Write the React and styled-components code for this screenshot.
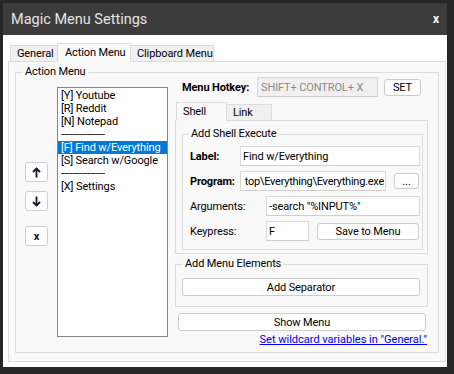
import React, { useState } from 'react';
import styled, { createGlobalStyle } from 'styled-components';

const GlobalStyle = createGlobalStyle`
  body {
    margin: 0;
    background: #262626;
    font-family: Roboto, "Open Sans", sans-serif;
    font-size: 11px;
    letter-spacing: -0.12px;
    color: #000;
  }
`;

const Window = styled.div`
  margin: 3px 0 0 3px;
  width: 444px;
  height: 364px;
  background: #fff;
  display: flex;
  flex-direction: column;
`;

const TitleBar = styled.div`
  height: 32px;
  flex: none;
  background: #3c3c3c;
  color: #e4e4e4;
  display: flex;
  align-items: center;
  justify-content: space-between;
  padding: 0 8px 0 8px;
  font-size: 14.5px;
  letter-spacing: 0;
`;

const CloseButton = styled.span`
  font-weight: bold;
  font-size: 12px;
  color: #fff;
  cursor: pointer;
`;

const Body = styled.div`
  flex: 1;
  display: flex;
  flex-direction: column;
  padding: 8px 1px 5px 5px;
  min-height: 0;
`;

const TabStrip = styled.div`
  display: flex;
  align-items: flex-end;
  padding-left: ${p => p.$indent || 0}px;
  margin-bottom: -1px;
  position: relative;
  z-index: 1;
`;

const Tab = styled.div`
  box-sizing: border-box;
  width: ${p => p.$width}px;
  height: ${p => (p.$active ? 19 : 17)}px;
  padding: 0 0 0 ${p => p.$pad || 6}px;
  border: 1px solid #dcdcdc;
  border-bottom-color: ${p => (p.$active ? '#f9f9f9' : '#dcdcdc')};
  background: ${p => (p.$active ? '#f9f9f9' : '#f0f0f0')};
  display: flex;
  align-items: center;
  line-height: 1;
  white-space: nowrap;
  cursor: default;
  & + & {
    margin-left: -1px;
  }
`;

const TabPanel = styled.div`
  flex: 1;
  box-sizing: border-box;
  border: 1px solid #dcdcdc;
  background: #f9f9f9;
  padding: 4px 6px 8px 6px;
  display: flex;
  flex-direction: column;
  min-height: 0;
`;

const GroupBox = styled.fieldset`
  margin: 0;
  border: 1px solid #dcdcdc;
  padding: ${p => p.$pad || '0'};
  min-width: 0;
  flex: ${p => (p.$grow ? 1 : 'none')};
`;

const Legend = styled.legend`
  padding: 0 2px;
  margin-left: ${p => p.$offset ?? 6}px;
  line-height: 12px;
  font-size: 11px;
`;

const GroupRow = styled.div`
  display: flex;
  align-items: flex-start;
  gap: 9px;
`;

const ButtonColumn = styled.div`
  width: 23px;
  margin-top: 84px;
  display: flex;
  flex-direction: column;
`;

const IconButton = styled.button`
  box-sizing: border-box;
  width: 23px;
  height: 20px;
  margin-top: ${p => p.$gap || 0}px;
  padding: 0;
  background: #fff;
  border: 1px solid #cfcfcf;
  border-radius: 3px;
  display: flex;
  align-items: center;
  justify-content: center;
  font-family: inherit;
  font-weight: bold;
  font-size: 11px;
  color: #111122;
`;

const ListBox = styled.ul`
  box-sizing: border-box;
  width: 111px;
  height: 250px;
  margin: 9px 0 0 0;
  padding: 1px 0 0 0;
  list-style: none;
  background: #fff;
  border: 1px solid #85858f;
`;

const ListItem = styled.li`
  height: 13px;
  line-height: 13px;
  padding-left: 3px;
  white-space: nowrap;
  overflow: hidden;
  background: ${p => (p.$selected ? '#0078d7' : 'transparent')};
  color: ${p => (p.$selected ? '#fff' : '#000')};
  cursor: default;
`;

const RightColumn = styled.div`
  width: 253px;
  margin-left: -2px;
  margin-top: -1px;
  display: flex;
  flex-direction: column;
`;

const HotkeyRow = styled.div`
  display: flex;
  align-items: center;
  height: 20px;
`;

const HotkeyLabel = styled.span`
  width: 75px;
  padding-left: 7px;
  font-weight: bold;
  white-space: nowrap;
`;

const TextInput = styled.input`
  box-sizing: border-box;
  width: ${p => p.$width}px;
  height: 20px;
  margin: 0;
  padding: 0 ${p => (p.$showEnd ? 1 : 2)}px 0 ${p => (p.$disabled ? 3 : 2)}px;
  border: 1px solid #d9d9d9;
  border-bottom-color: #cfcfcf;
  background: ${p => (p.$disabled ? '#f0f0f0' : '#fff')};
  color: ${p => (p.$disabled ? '#8a8a8a' : '#000')};
  font-family: inherit;
  font-size: 11px;
  letter-spacing: ${p => (p.$showEnd ? -0.25 : -0.12)}px;
  outline: none;
  direction: ${p => (p.$showEnd ? 'rtl' : 'ltr')};
`;

const PushButton = styled.button`
  box-sizing: border-box;
  width: ${p => (p.$width ? `${p.$width}px` : 'auto')};
  flex: ${p => (p.$fill ? 1 : 'none')};
  height: ${p => p.$height || 18}px;
  margin: 0;
  padding: 0;
  background: #fff;
  border: 1px solid #cccccc;
  border-radius: 3px;
  font-family: inherit;
  font-size: 11px;
  letter-spacing: -0.12px;
  color: #000;
  line-height: 1;
`;

const InnerTabArea = styled.div`
  margin-top: 5px;
  display: flex;
  flex-direction: column;
`;

const InnerPanel = styled.div`
  box-sizing: border-box;
  border: 1px solid #dcdcdc;
  background: #f9f9f9;
  padding: 7px 4px 3px 6px;
`;

const FormRows = styled.div`
  display: flex;
  flex-direction: column;
  gap: 5px;
  padding: 6px 2px 8px 7px;
`;

const FormRow = styled.div`
  display: flex;
  align-items: center;
  height: 20px;
`;

const FieldLabel = styled.span`
  width: ${p => p.$width}px;
  flex: none;
  font-weight: ${p => (p.$bold ? 'bold' : 'normal')};
`;

const Spacer = styled.span`
  width: ${p => p.$w}px;
  flex: none;
`;

const ElementsBox = styled.div`
  margin-top: 4px;
`;

const ElementsInner = styled.div`
  padding: 8px 7px 10px 6px;
  display: flex;
`;

const ShowMenuRow = styled.div`
  margin: 6px 2px 0 3px;
  display: flex;
`;

const HelpLink = styled.a`
  align-self: flex-end;
  margin: 3px 1px 0 0;
  color: #0000ee;
  text-decoration: underline;
  line-height: 12px;
  letter-spacing: 0;
  cursor: pointer;
`;

const ArrowIcon = ({ down }) => (
  <svg width="9" height="11" viewBox="0 0 9 11">
    <g
      fill="none"
      stroke="#141428"
      strokeWidth="1.8"
      transform={down ? 'rotate(180 4.5 5.5)' : undefined}
    >
      <path d="M4.5 1.5 V10.5" />
      <path d="M1 5 L4.5 1.5 L8 5" />
    </g>
  </svg>
);

const menuItems = [
  '[Y] Youtube',
  '[R] Reddit',
  '[N] Notepad',
  '---------------',
  '[F] Find w/Everything',
  '[S] Search w/Google',
  '---------------',
  '[X] Settings',
];

export default function App() {
  const [mainTab, setMainTab] = useState('action');
  const [innerTab, setInnerTab] = useState('shell');
  const [selected, setSelected] = useState(4);

  return (
    <>
      <GlobalStyle />
      <Window>
        <TitleBar>
          <span>Magic Menu Settings</span>
          <CloseButton>x</CloseButton>
        </TitleBar>
        <Body>
          <TabStrip $indent={2}>
            <Tab $width={48} $active={mainTab === 'general'} onClick={() => setMainTab('general')}>General</Tab>
            <Tab $width={74} $pad={7} $active={mainTab === 'action'} onClick={() => setMainTab('action')}>Action Menu</Tab>
            <Tab $width={84} $active={mainTab === 'clip'} onClick={() => setMainTab('clip')}>Clipboard Menu</Tab>
          </TabStrip>
          <TabPanel>
            <GroupBox $grow $pad="0 10px 0 9px">
              <Legend $offset={-2}>Action Menu</Legend>
              <GroupRow>
                <ButtonColumn>
                  <IconButton><ArrowIcon /></IconButton>
                  <IconButton $gap={9}><ArrowIcon down /></IconButton>
                  <IconButton $gap={15}>x</IconButton>
                </ButtonColumn>
                <ListBox>
                  {menuItems.map((item, i) => (
                    <ListItem key={i} $selected={i === selected} onClick={() => setSelected(i)}>
                      {item}
                    </ListItem>
                  ))}
                </ListBox>
                <RightColumn>
                  <HotkeyRow>
                    <HotkeyLabel>Menu Hotkey:</HotkeyLabel>
                    <TextInput $width={121} $disabled readOnly value="SHIFT+ CONTROL+ X" />
                    <Spacer $w={6} />
                    <PushButton $width={37} $height={17}>SET</PushButton>
                  </HotkeyRow>
                  <InnerTabArea>
                    <TabStrip $indent={1}>
                      <Tab $width={51} $active={innerTab === 'shell'} onClick={() => setInnerTab('shell')}>Shell</Tab>
                      <Tab $width={46} $active={innerTab === 'link'} onClick={() => setInnerTab('link')}>Link</Tab>
                    </TabStrip>
                    <InnerPanel>
                      <GroupBox>
                        <Legend>Add Shell Execute</Legend>
                        <FormRows>
                          <FormRow>
                            <FieldLabel $bold $width={50}>Label:</FieldLabel>
                            <TextInput $width={180} defaultValue="Find w/Everything" />
                          </FormRow>
                          <FormRow>
                            <FieldLabel $bold $width={50}>Program:</FieldLabel>
                            <TextInput $width={146} $showEnd defaultValue="top\Everything\Everything.exe" />
                            <Spacer $w={8} />
                            <PushButton $width={25} $height={16}>...</PushButton>
                          </FormRow>
                          <FormRow>
                            <FieldLabel $width={76}>Arguments:</FieldLabel>
                            <TextInput $width={154} defaultValue='-search "%INPUT%"' />
                          </FormRow>
                          <FormRow>
                            <FieldLabel $width={76}>Keypress:</FieldLabel>
                            <TextInput $width={43} defaultValue="F" />
                            <Spacer $w={8} />
                            <PushButton $width={102} $height={17}>Save to Menu</PushButton>
                          </FormRow>
                        </FormRows>
                      </GroupBox>
                    </InnerPanel>
                  </InnerTabArea>
                  <ElementsBox>
                    <GroupBox>
                      <Legend $offset={7}>Add Menu Elements</Legend>
                      <ElementsInner>
                        <PushButton $fill>Add Separator</PushButton>
                      </ElementsInner>
                    </GroupBox>
                  </ElementsBox>
                  <ShowMenuRow>
                    <PushButton $fill>Show Menu</PushButton>
                  </ShowMenuRow>
                  <HelpLink>Set wildcard variables in "General."</HelpLink>
                </RightColumn>
              </GroupRow>
            </GroupBox>
          </TabPanel>
        </Body>
      </Window>
    </>
  );
}
